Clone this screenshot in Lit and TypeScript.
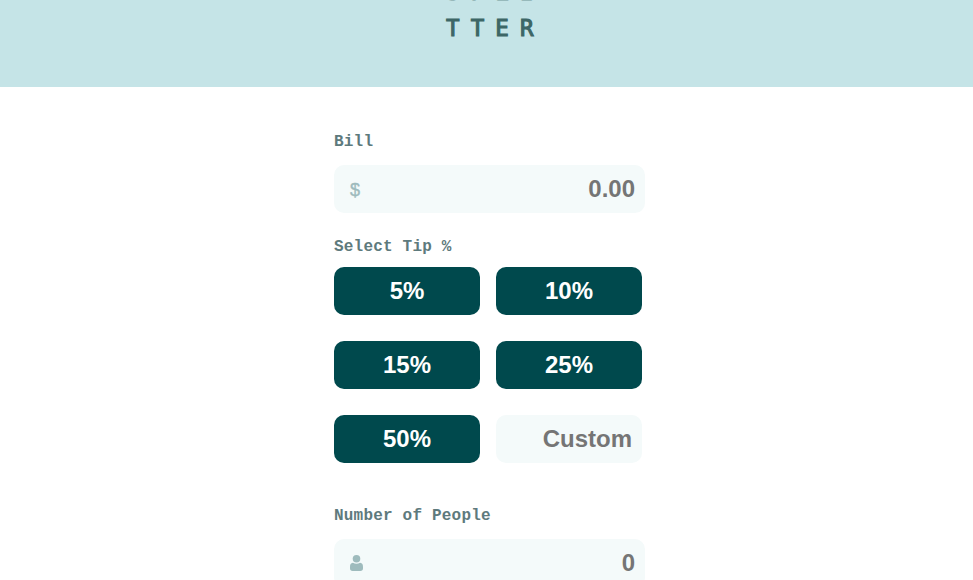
import { LitElement, html, css, svg } from "lit";
import { customElement } from "lit/decorators.js";

const TIPS = [5, 10, 15, 25, 50];

const personIcon = svg`
  <circle cx="6.5" cy="3.8" r="3.8"></circle>
  <path d="M2.900 7.800C4 8.500 5.200 8.700 6.500 8.700s2.500-.2 3.600-.9C12.300 8 13 9.700 13 12v1.200C13 15 12.100 16 10.400 16H2.600C.9 16 0 15 0 13.200V12C0 9.700 .7 8 2.900 7.800z"></path>
`;

@customElement("app-root")
export class AppRoot extends LitElement {
  static styles = css`
    :host {
      display: block;
      height: 580px;
      overflow: hidden;
      background: #fff;
      font-family: "Liberation Sans", Arial, sans-serif;
    }
    * {
      box-sizing: border-box;
    }
    .header {
      height: 87px;
      background: #c5e4e7;
      display: flex;
      flex-direction: column;
      justify-content: flex-end;
      padding: 0 0 41px 446px;
      overflow: hidden;
    }
    .logo {
      flex: none;
      font: 400 22.5px/36px "DejaVu Sans Mono", monospace;
      letter-spacing: 11.1px;
      color: #3d6666;
      -webkit-text-stroke: 1.1px #3d6666;
      white-space: pre;
    }
    .logo .faded {
      opacity: 0.6;
    }
    .logo div {
      height: 36px;
    }
    .form {
      width: 311px;
      margin-left: 334px;
      padding-top: 45px;
    }
    .label {
      display: block;
      height: 20px;
      font: 700 16px/20px "Liberation Mono", monospace;
      letter-spacing: 0.2px;
      color: #5e7a7d;
    }
    .field {
      display: flex;
      align-items: center;
      height: 48px;
      padding: 0 10px 0 15px;
      border-radius: 10px;
      background: #f4fafa;
      margin-top: 13px;
    }
    .icon {
      flex: none;
      width: 13px;
      height: 16px;
      margin-left: 1px;
      fill: #9ebbbd;
    }
    .dollar {
      flex: none;
      width: 13px;
      margin-left: 1px;
      padding-top: 1px;
      font: 400 18px/20px "Liberation Sans", Arial, sans-serif;
      -webkit-text-stroke: 0.4px #9ebbbd;
      color: #9ebbbd;
    }
    input {
      flex: 1;
      min-width: 0;
      height: 48px;
      padding: 0;
      border: 0;
      outline: 0;
      background: transparent;
      text-align: right;
      font: 700 24px "Liberation Sans", Arial, sans-serif;
      color: #00474b;
    }
    input::placeholder {
      color: #757575;
      opacity: 1;
    }
    .tip-label {
      margin-top: 24px;
    }
    .tips {
      display: grid;
      grid-template-columns: 146px 146px;
      gap: 26px 16px;
      margin: 10px 0 43px;
    }
    .tip {
      height: 48px;
      padding: 0;
      border: 0;
      border-radius: 10px;
      background: #00494d;
      color: #fff;
      font: 700 24px "Liberation Sans", Arial, sans-serif;
    }
    .custom {
      width: 146px;
      padding: 0 10px;
      border-radius: 10px;
      background: #f4fafa;
    }
  `;

  render() {
    return html`
      <header class="header">
        <div class="logo"><div class="faded">SPLI</div><div>TTER</div></div>
      </header>
      <main class="form">
        <label class="label" for="bill">Bill</label>
        <div class="field">
          <span class="dollar">$</span>
          <input id="bill" placeholder="0.00" />
        </div>
        <span class="label tip-label">Select Tip %</span>
        <div class="tips">
          ${TIPS.map((t) => html`<button class="tip">${t}%</button>`)}
          <input class="custom" placeholder="Custom" />
        </div>
        <label class="label" for="people">Number of People</label>
        <div class="field">
          <svg class="icon" viewBox="0 0 13 16">${personIcon}</svg>
          <input id="people" placeholder="0" />
        </div>
      </main>
    `;
  }
}
